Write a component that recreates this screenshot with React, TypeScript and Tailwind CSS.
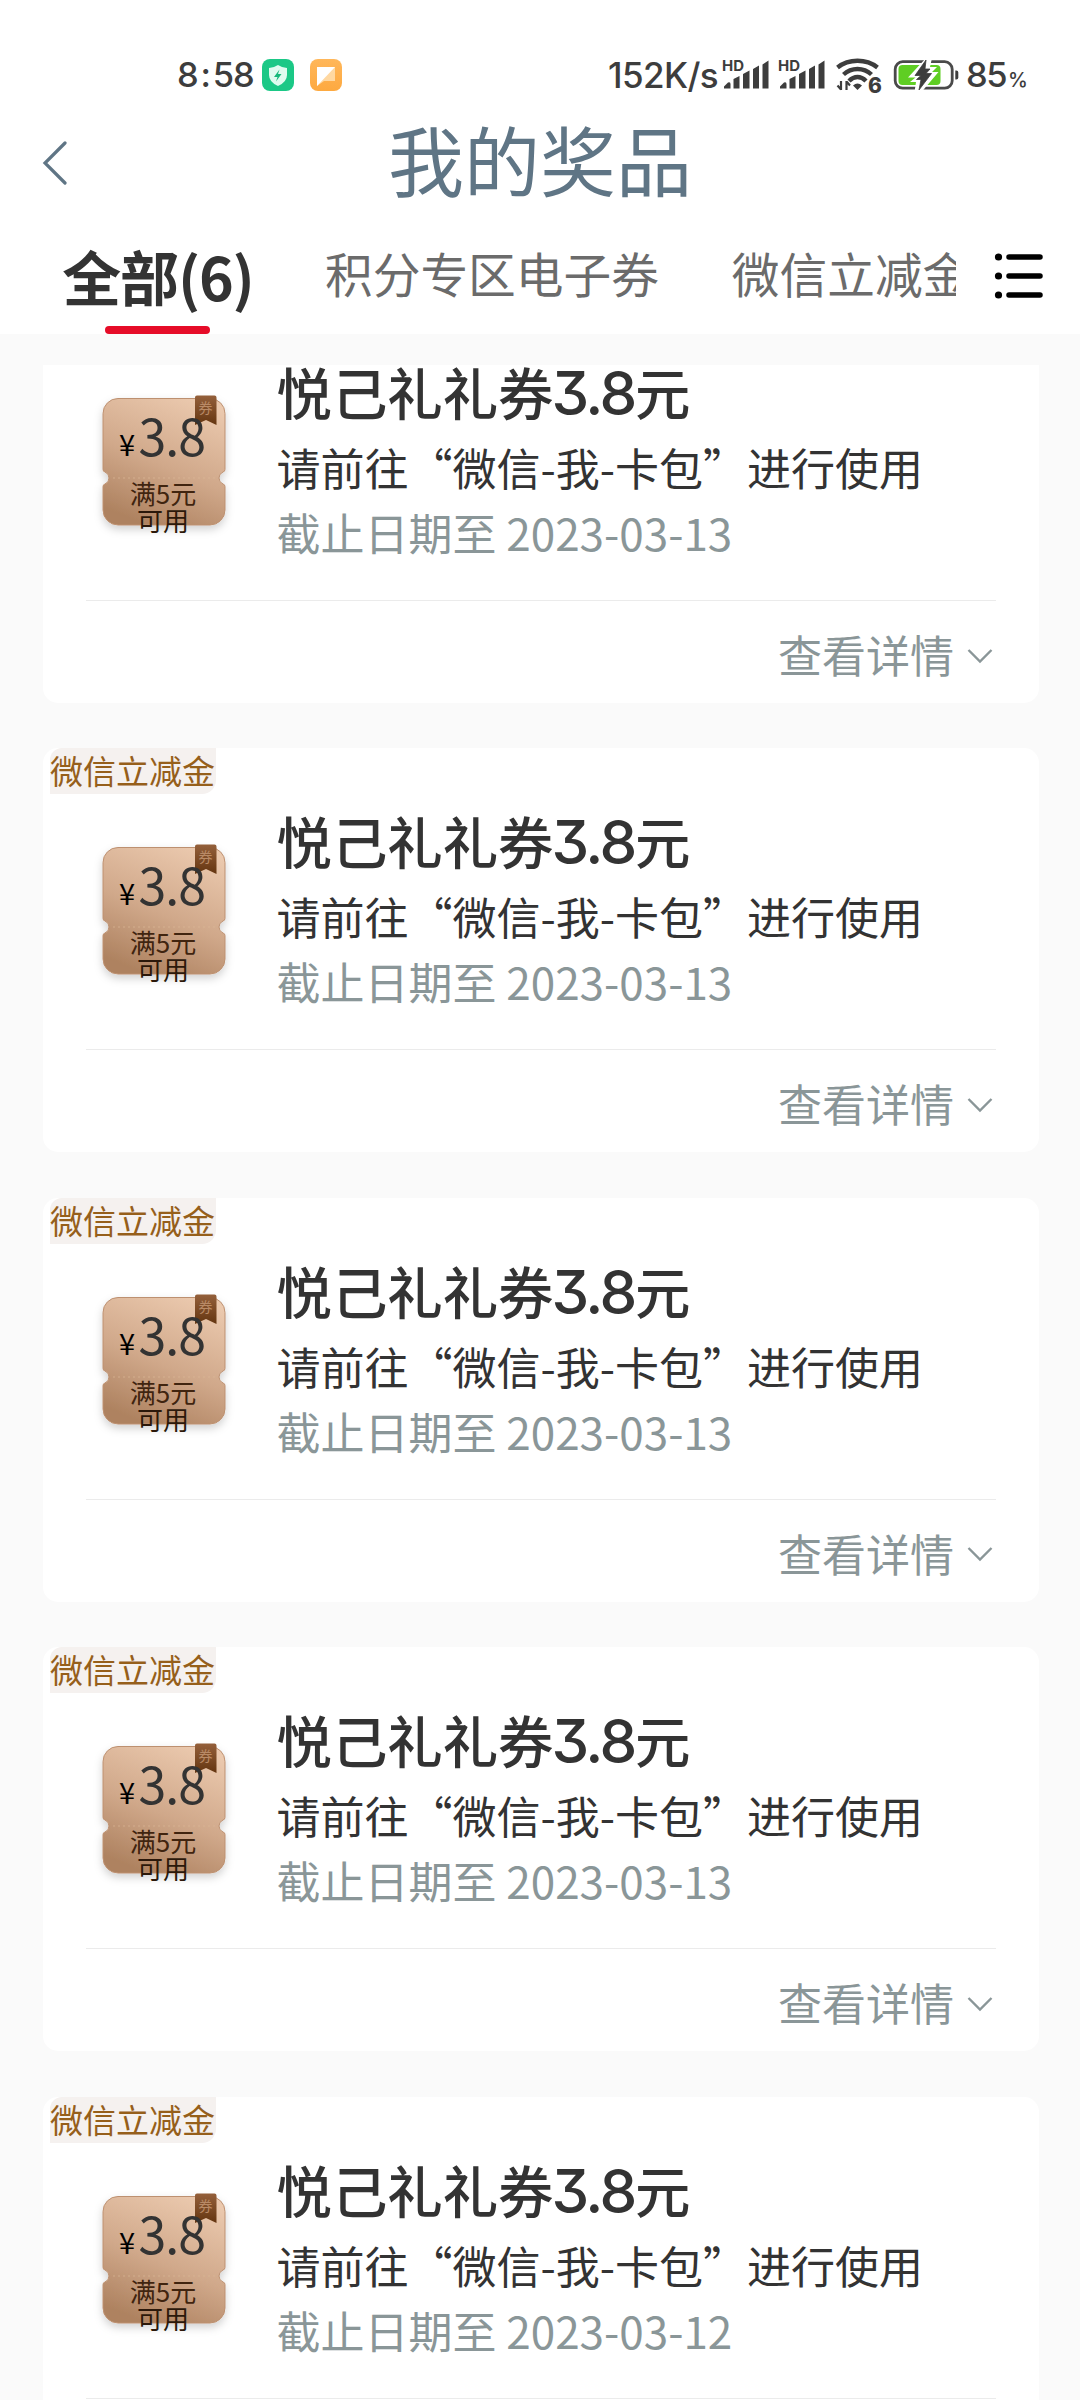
import React from "react";

const prizes = [
  { id: 1, date: "2023-03-13" },
  { id: 2, date: "2023-03-13" },
  { id: 3, date: "2023-03-13" },
  { id: 4, date: "2023-03-13" },
  { id: 5, date: "2023-03-12" },
];

function Signal() {
  return (
    <svg width="48" height="34" viewBox="0 0 48 34" fill="#3d3d3d">
      <text x="0" y="12.500" fontSize="14.500" fontWeight="700" fontFamily="Inter, sans-serif" textLength="22" lengthAdjust="spacingAndGlyphs">
        HD
      </text>
      <path d="M2 30.500v-2l4-4q2.500-1 2.500 1.500v4.500zM11.500 30.500v-9.500l6-3v12.500zM21 30.500V16l6.500-3.500v18zM31 30.500V11l6-3.500v23zM40.500 30.500V6.500l6-4v28z" />
    </svg>
  );
}

function WifiIcon() {
  return (
    <svg width="48" height="38" viewBox="0 0 48 38" fill="none" stroke="#3d3d3d">
      <path d="M2.500 11.500Q11 4.800 22.500 4.800T42.500 11.500" strokeWidth="4.400" />
      <path d="M8.500 18.500q6-5.500 14-5.500t14 5.500" strokeWidth="4.400" />
      <path d="M14 25q4-4 8.500-4t8.500 4" strokeWidth="4.400" />
      <path d="M18 29.500q4.500-4 9 0L22.500 34z" fill="#3d3d3d" stroke="none" />
      <path d="M6 25v9M2.500 29.500 6 33.500M11.500 34v-9M11.500 25.500l3.500 4" strokeWidth="2.200" />
      <text x="33" y="37.300" fontSize="21" fontWeight="800" fill="#3d3d3d" stroke="#fff" strokeWidth="3" paintOrder="stroke" fontFamily="Inter, sans-serif">
        6
      </text>
    </svg>
  );
}

function Battery() {
  return (
    <svg width="68" height="34" viewBox="0 0 68 34" fill="none">
      <rect x="3.200" y="3.700" width="57" height="26.500" rx="7.500" stroke="#4a4a4a" strokeWidth="2.800" />
      <rect x="6.500" y="7" width="42" height="20" rx="4" fill="#5fce23" />
      <path d="M63.300 12.500h1q2 0 2 2v5q0 2-2 2h-1z" fill="#3d3d3d" />
      <path d="M34 0 16 19.500h7.500L18 24h6l-1.500 10h7L46.500 14H40l5-5H38l2-9z" fill="#fff" />
      <path d="M34 2 23 17.500h6L24.500 21.500H29l-2 10.500L39.500 15.500H34L38 11h-5z" fill="#3d3d3d" stroke="#3d3d3d" strokeWidth="0.800" />
    </svg>
  );
}

function StatusBar() {
  return (
    <div className="flex h-[118px] items-center pt-[32px] font-[Inter,'Noto_Sans_CJK_SC',sans-serif] text-[#3d3d3d]">
      <span className="ml-[177px] w-[85px] text-[34.500px] font-medium leading-none tracking-[-1.200px]">
        8<span className="mr-[3px] ml-[3px]">:</span>58
      </span>
      <svg width="32" height="32" viewBox="0 0 32 32">
        <rect width="32" height="32" rx="8" fill="#1bc886" />
        <path d="M16 6q4.500 3 9 3v7q0 7-9 11-9-4-9-11V9q4.500 0 9-3z" fill="#dffbef" />
        <path d="M17.500 10.500 12 18h3.500l-1.500 4.500 5.500-7.500h-3.500z" fill="#17b97b" />
      </svg>
      <svg className="ml-[16px]" width="32" height="32" viewBox="0 0 32 32">
        <defs>
          <linearGradient id="note" x1="0" y1="0" x2="0" y2="1">
            <stop stopColor="#ffb75a" />
            <stop offset="1" stopColor="#fda940" />
          </linearGradient>
        </defs>
        <rect width="32" height="32" rx="8" fill="url(#note)" />
        <path d="M7 8h18v14H14l-7 5z" fill="#ffd8a1" />
        <path d="M7 8h18L7 27z" fill="#fff" />
      </svg>
      <span className="ml-[266px] w-[114px] text-[35px] font-medium leading-none tracking-[-0.600px]">152K/s</span>
      <Signal />
      <span className="ml-[8px] flex">
        <Signal />
      </span>
      <span className="ml-[9px] flex">
        <WifiIcon />
      </span>
      <span className="ml-[9px] flex">
        <Battery />
      </span>
      <span className="ml-[6px] flex items-baseline leading-none">
        <span className="w-[42px] text-[34.500px] font-medium tracking-[-1.500px]">85</span>
        <span className="text-[20px] font-medium">%</span>
      </span>
    </div>
  );
}

function Coupon() {
  return (
    <div className="relative mt-[92px] ml-[50px] h-[150px] w-[143px]">
      <svg className="absolute inset-0" width="143" height="150" viewBox="0 0 143 150">
        <defs>
          <linearGradient id="bronze" x1="0.750" y1="0" x2="0.350" y2="1">
            <stop stopColor="#ebc9ae" />
            <stop offset="0.550" stopColor="#d0a88a" />
            <stop offset="1" stopColor="#ae8260" />
          </linearGradient>
          <linearGradient id="ribbon" x1="0" y1="0" x2="0" y2="1">
            <stop stopColor="#94603b" />
            <stop offset="1" stopColor="#643510" />
          </linearGradient>
          <filter id="soft" x="-20%" y="-20%" width="140%" height="140%">
            <feDropShadow dx="0" dy="4" stdDeviation="4" floodColor="#000" floodOpacity="0.180" />
          </filter>
        </defs>
        <path
          d="M25 7.500H117a15 15 0 0 1 15 15V78.500q0 2-2 2.500a6.500 6.500 0 0 0 0 12q2 .5 2 2.500V119a15 15 0 0 1-15 15H25a15 15 0 0 1-15-15V95.500q0-2 2-2.500a6.500 6.500 0 0 0 0-12q-2-.5-2-2.500V22.500a15 15 0 0 1 15-15z"
          fill="url(#bronze)"
          stroke="#bd9070"
          strokeWidth="1"
          filter="url(#soft)"
        />
        <path d="M20 87H124" stroke="#dcb899" strokeOpacity="0.700" strokeDasharray="2 3" />
        <path d="M102 6.500q0-2 2-2h17.500q2 0 2 2V34l-10.500-5-11 5z" fill="url(#ribbon)" />
        <text x="105.500" y="22" fontSize="14" fill="#b98a66" fontFamily="'Noto Sans CJK SC', sans-serif">
          券
        </text>
      </svg>
      <div className="relative flex items-baseline pt-[18px] pl-[26px] leading-[50px]">
        <span className="w-[19.500px] text-[29px] text-black">¥</span>
        <span className="text-[50px] tracking-[-1px] text-[#333]">3.8</span>
      </div>
      <div className="relative mt-[11px] mr-[3px] text-center text-[26px] leading-[27px] text-[#40240f]">
        满5元
        <br />
        <span className="text-[#2b180a]">可用</span>
      </div>
    </div>
  );
}

function PrizeCard({ date }: { date: string }) {
  return (
    <article className="relative h-[404px] w-[996px] shrink-0 rounded-[15px] bg-white">
      <span className="absolute top-0 left-[7px] h-[46px] w-[166px] rounded-tl-[12px] rounded-br-[14px] bg-[#f5f1ef] text-[33px] leading-[45px] whitespace-nowrap text-[#965f1b]">
        微信立减金
      </span>
      <div className="flex h-[301px]">
        <Coupon />
        <div className="ml-[40.500px] pt-[59px]">
          <h2 className="flex items-baseline text-[55.400px] leading-[66px] font-medium text-[#333]">
            悦己礼礼券
            <span className="-ml-[2px] w-[83.500px] font-[Inter] text-[60px] tracking-[-2.500px] [font-feature-settings:'cv09']">3.8</span>元
          </h2>
          <p className="mt-[8px] text-[44px] leading-[66px] text-[#333]">请前往“微信-我-卡包”进行使用</p>
          <p className="text-[44px] leading-[64px] text-[#8a9698]">截止日期至 {date}</p>
        </div>
      </div>
      <div className="mx-[43px] flex h-[103px] items-center justify-end border-t border-[#ebebeb] text-[44px] text-[#8a9698]">
        <span className="mt-[4px] leading-[60px]">查看详情</span>
        <svg className="mt-[7px] mr-[3px] ml-[13px]" width="26" height="16" viewBox="0 0 26 16" fill="none" stroke="#8a9698" strokeWidth="2.400">
          <path d="M1.500 2 13 13.500 24.500 2" />
        </svg>
      </div>
    </article>
  );
}

export default function App() {
  return (
    <div lang="zh-CN" className="flex h-[2400px] w-[1080px] flex-col overflow-hidden bg-[#fafafa] font-['Noto_Sans_CJK_SC',sans-serif]">
      <header className="h-[334px] shrink-0 bg-white">
        <StatusBar />
        <div className="flex h-[90px] items-center">
          <svg className="ml-[42px]" width="26" height="44" viewBox="0 0 26 44" fill="none" stroke="#5f7585" strokeWidth="3.200" strokeLinecap="round">
            <path d="M23 2 3 22l20 20" />
          </svg>
          <h1 className="-mt-[10px] ml-[320px] text-[76px] leading-[80px] text-[#5f7585]">我的奖品</h1>
        </div>
        <nav className="flex h-[126px]">
          <div className="flex w-[956px] overflow-hidden whitespace-nowrap">
            <div className="ml-[62px] flex w-[190px] shrink-0 flex-col items-center pt-[30px]">
              <span className="ml-[2px] text-[59px] leading-[76px] font-bold tracking-[-1.200px] text-[#333]">全部(6)</span>
              <span className="mt-[12px] h-[8px] w-[105px] rounded-full bg-[#e60c28]" />
            </div>
            <span className="ml-[73px] shrink-0 pt-[35px] text-[47.700px] leading-[60px] text-[#6b6b6b]">积分专区电子券</span>
            <span className="ml-[73px] shrink-0 pt-[35px] text-[47.700px] leading-[60px] text-[#6b6b6b]">微信立减金</span>
          </div>
          <svg className="mt-[44px] ml-[38px]" width="50" height="48" viewBox="0 0 50 48" fill="none" stroke="#000" strokeWidth="5.500" strokeLinecap="round">
            <path d="M15 5H46M15 24H46M15 43H46" />
            <g fill="#000" stroke="none">
              <circle cx="4.500" cy="5" r="3.600" />
              <circle cx="4.500" cy="24" r="3.600" />
              <circle cx="4.500" cy="43" r="3.600" />
            </g>
          </svg>
        </nav>
      </header>
      <main className="mt-[31px] flex-1 overflow-hidden">
        <div className="mt-[-66px] flex flex-col gap-[45.400px] pl-[43px]">
          {prizes.map((p) => (
            <PrizeCard key={p.id} date={p.date} />
          ))}
        </div>
      </main>
    </div>
  );
}
